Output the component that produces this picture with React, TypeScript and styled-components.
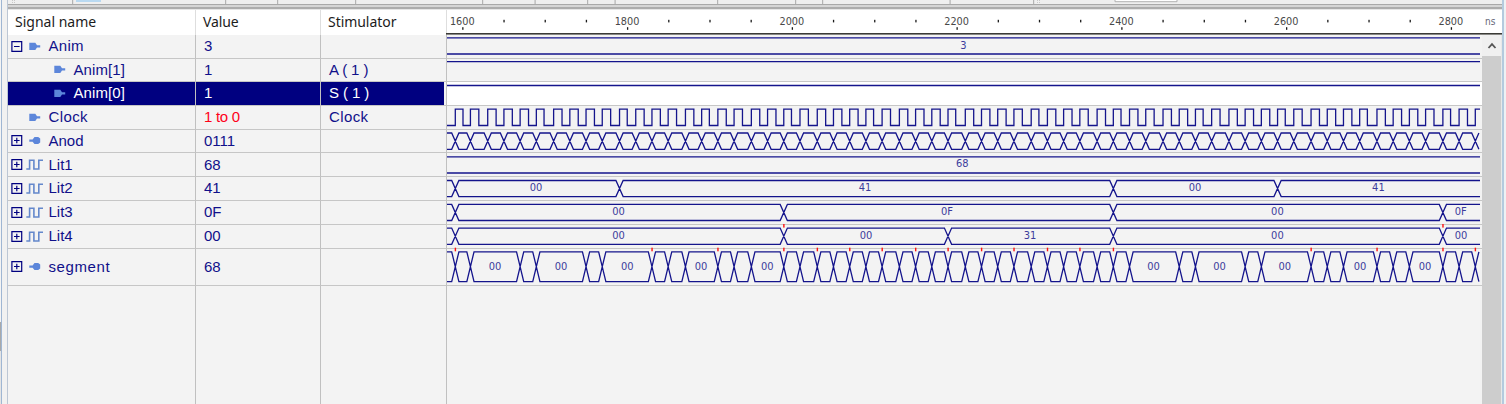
import React from "react";
import styled, { createGlobalStyle } from "styled-components";

const NAVY = "#000080";
const SMALL_FONT = '"DejaVu Sans Condensed", "DejaVu Sans", sans-serif';

const Global = createGlobalStyle`
  body { margin: 0; background: #f0f0f0; overflow: hidden; }
  * { box-sizing: border-box; }
`;

const Window = styled.div`
  display: grid;
  grid-template-columns: 8px 1494px 4px;
  width: 1506px;
  height: 404px;
  overflow: hidden;
`;

const LeftEdge = styled.div`
  display: flex;
  background: #f1f1f1;
  border-right: 1px solid #bcc6d4;
`;

const EdgeSlot = styled.div`
  width: 2px;
  height: 404px;
  border-right: 1px solid #9fb6d3;
  background: linear-gradient(#f4f4f4 0 322px, #a9a9a9 322px 351px, #e4e4e4 351px);
`;

const RightEdge = styled.div`
  background: #eef1f4;
  border-left: 2px solid #b4cade;
`;

const Main = styled.div`
  display: flex;
  flex-direction: column;
  background: #f3f3f3;
`;

const Toolbar = styled.div`
  display: block;
  flex: none;
  height: 10px;
  background: #efefef;
`;

const Header = styled.div`
  flex: none;
  display: grid;
  grid-template-columns: 188px 125px 126px 1055px;
  height: 25px;
  background: #fff;
`;

const HeaderCell = styled.div`
  border-right: 1px solid #dedede;
  padding: 0 0 0 7px;
  font: 14px/23px "Noto Sans", "Open Sans", sans-serif;
  color: #1c1c1c;
  white-space: nowrap;
`;

const HeaderText = styled.span<{ $spacing: number }>`
  letter-spacing: ${(p) => p.$spacing}px;
`;

const Content = styled.div`
  flex: 1;
  display: grid;
  grid-template-columns: 1474px 20px;
`;

const Rows = styled.div`
  display: flex;
  flex-direction: column;
`;

const Row = styled.div<{ $height: number }>`
  flex: none;
  display: grid;
  grid-template-columns: 188px 125px 126px 1035px;
  height: ${(p) => p.$height}px;
`;

const Blank = styled(Row)`
  flex: 1;
`;

const Cell = styled.div<{ $selected?: boolean; $indent?: number; $red?: boolean; $blank?: boolean }>`
  display: flex;
  align-items: center;
  min-width: 0;
  padding-left: ${(p) => p.$indent ?? 8}px;
  border-right: 1px solid #c0c0c0;
  border-bottom: ${(p) => (p.$blank ? "none" : "1px solid #c6c6c6")};
  background: ${(p) => (p.$selected ? NAVY : "#f3f3f3")};
  color: ${(p) => (p.$selected ? "#fff" : p.$red ? "#ff0018" : "#10108a")};
  font: 15px/20px "Liberation Sans", Arial, sans-serif;
  white-space: pre;
`;

const LastCell = styled(Cell)`
  box-shadow: ${(p) => (p.$selected ? "inset -2px 0 #f3f3f3" : "none")};
`;

const WaveCell = styled.div<{ $selected?: boolean }>`
  border-bottom: 1px solid #c6c6c6;
  background: ${(p) => (p.$selected ? "#fff" : "#f3f3f3")};
`;

const Svg = styled.svg`
  display: block;
  overflow: visible;
`;

const IconSlot = styled.span<{ $width: number }>`
  display: flex;
  flex: none;
  width: ${(p) => p.$width}px;
`;

const Label = styled.span<{ $low?: boolean; $spacing?: number }>`
  display: block;
  padding-top: ${(p) => (p.$low ? 1 : 0)}px;
  padding-bottom: ${(p) => (p.$low ? 0 : 1)}px;
  letter-spacing: ${(p) => p.$spacing ?? 0}px;
`;

const Scroll = styled.div`
  display: flex;
  flex-direction: column;
  background: #cdcdcd;
  border-right: 1px solid #e8e8e8;
`;

const ScrollButton = styled.div`
  display: flex;
  height: 21px;
  background: #f0f0f0;
  justify-content: center;
  align-items: center;
`;

/** Horizontal position of the n-th 20 ns transition. */
const tx = (n: number) => 455.3 + 1.0805 * (n === 0 ? 0 : Math.floor(15.24 * n - 0.25));

const range = (a: number, b: number) => Array.from({ length: b - a + 1 }, (_, i) => a + i);

type Note = [number, string];
interface Signal {
  name: string;
  value: string;
  stimulator?: string;
  height: number;
  low?: boolean;
  spacing?: number;
  icon: "in" | "out" | "wave";
  box?: "+" | "-";
  child?: boolean;
  selected?: boolean;
  red?: boolean;
  kind: "bus" | "high" | "clock";
  hi: number;
  lo?: number;
  edges?: number[];
  notes?: Note[];
  base?: number;
  marks?: number[];
}

const signals: Signal[] = [
  { name: "Anim", value: "3", height: 24, spacing: 0.3, icon: "in", box: "-", kind: "bus", hi: 37.8, lo: 54, notes: [[963.3, "3"]], base: 48.5 },
  { name: "Anim[1]", value: "1", stimulator: "A ( 1 )", height: 23, spacing: 0.1, icon: "in", child: true, kind: "high", hi: 61.6 },
  { name: "Anim[0]", value: "1", stimulator: "S ( 1 )", height: 24, spacing: 0.1, icon: "in", child: true, selected: true, kind: "high", hi: 85.5 },
  { name: "Clock", value: "1 to 0", stimulator: "Clock", height: 24, spacing: 0.4, icon: "in", red: true, kind: "clock", hi: 109.2, lo: 125.5 },
  { name: "Anod", value: "0111", height: 23, icon: "out", box: "+", kind: "bus", hi: 133, lo: 149.3, edges: range(0, 62) },
  { name: "Lit1", value: "68", height: 24, low: true, icon: "wave", box: "+", kind: "bus", hi: 156.8, lo: 173, notes: [[962.3, "68"]], base: 167.3 },
  { name: "Lit2", value: "41", height: 24, icon: "wave", box: "+", kind: "bus", hi: 180.5, lo: 196.6, edges: [0, 10, 40, 50], notes: [[536, "00"], [865, "41"], [1195, "00"], [1378.4, "41"]], base: 191.2 },
  { name: "Lit3", value: "0F", height: 24, icon: "wave", box: "+", kind: "bus", hi: 204.4, lo: 220.5, edges: [0, 20, 40, 60], notes: [[618.6, "00"], [947, "0F"], [1277.4, "00"], [1460.8, "0F"]], base: 215 },
  { name: "Lit4", value: "00", height: 24, icon: "wave", box: "+", kind: "bus", hi: 228.1, lo: 244.3, edges: [0, 20, 30, 40, 60], notes: [[618.6, "00"], [866, "00"], [1030, "31"], [1277.4, "00"], [1461, "00"]], base: 238.8, marks: [20, 60] },
  {
    name: "segment", value: "68", height: 37, spacing: 0.6, icon: "out", box: "+", kind: "bus", hi: 251.8, lo: 281.6,
    edges: [0, 1, 4, 5, 8, 9, 12, 13, 14, 16, 17, 18, ...range(20, 41), 44, 45, 48, 49, 52, 53, 54, 56, 57, 58, 60, 61, 62],
    notes: [495, 561, 627.2, 701, 767.3, 1153.5, 1219.5, 1284.8, 1360, 1425].map((x) => [x, "00"] as Note),
    base: 269.8,
    marks: [0, 12, 16, 20, 22, 24, 26, 28, 30, 32, 34, 36, 38, 40, 52, 56, 60, 62],
  },
];

function wavePath(s: Signal): string {
  const end = 1480;
  const { hi, lo = 0 } = s;
  if (s.kind === "high") return `M447 ${hi}H${end}`;
  if (s.kind === "clock") {
    let d = `M447 ${lo}`;
    for (let n = 0; n <= 62; n++) {
      const x = tx(n);
      d += `H${x}V${hi}`;
      d += n < 62 ? `H${x + (n % 5 === 0 ? 7.7 : 8.4)}V${lo}` : `H${end}`;
    }
    return d;
  }
  const e = s.edges ?? [];
  let a = `M447 ${hi}`;
  let b = `M447 ${lo}`;
  let up = true;
  for (const n of e) {
    const x = tx(n);
    const x2 = Math.min(x + 3.6, end);
    const t = (x2 - x + 3.6) / 7.2;
    const from = up ? hi : lo;
    const to = up ? lo : hi;
    a += `H${x - 3.6}L${x2} ${from + (to - from) * t}`;
    b += `H${x - 3.6}L${x2} ${to + (from - to) * t}`;
    up = !up;
  }
  if (e[e.length - 1] !== 62) {
    a += `H${end}`;
    b += `H${end}`;
  }
  return a + b;
}

function Wave({ s, top }: { s: Signal; top: number }) {
  return (
    <Svg width={1035} height={s.height - 1} viewBox={`447 ${top} 1035 ${s.height - 1}`}>
      <path d={wavePath(s)} fill="none" stroke="#14148c" strokeWidth={1.3} />
      {s.notes?.map(([x, t]) => (
        <text key={x} x={x} y={s.base} textAnchor="middle" fontSize={11} fill="#3c3c9c" fontFamily={SMALL_FONT}>
          {t}
        </text>
      ))}
      {s.marks?.map((n) => (
        <rect key={n} x={tx(n) - 0.6} y={s.hi - 4.1} width={1.4} height={3.6} fill="#ff1010" />
      ))}
    </Svg>
  );
}

function Expander({ sign }: { sign: "+" | "-" }) {
  return (
    <svg width="12" height="12" viewBox="0 0 12 12" fill="none" stroke={NAVY} strokeWidth="1.2">
      <path d={`M.9 .6H10.7V10.4H.9ZM3 5.5H8.6${sign === "+" ? "M5.8 2.7V8.3" : ""}`} />
    </svg>
  );
}

function SignalIcon({ type }: { type: Signal["icon"] }) {
  if (type === "wave")
    return (
      <svg width="18" height="12" viewBox="0 0 18 12" fill="none" stroke="#6488cc" strokeWidth="1.6">
        <path d="M.3 10H3.6V1.2H7.9V10H12.8V1.2H17" />
      </svg>
    );
  return (
    <svg width="18" height="12" viewBox="0 0 18 12" fill="#5c86da">
      {type === "in" ? (
        <path d="M3.3 1.8H9.3L11 4.2H14.2V6.6H11L9.3 9H3.3Z" />
      ) : (
        <path d="M3.3 4.6H6.6L8.5 2H12.2L14.2 3.6V7.6L12.2 9.1H8.5L6.6 6.8H3.3Z" />
      )}
    </svg>
  );
}

function ToolbarArt() {
  return (
    <Svg width={1494} height={10} viewBox="8 0 1494 10">
      {[72, 225, 277, 355, 482, 534.5, 587, 614.5, 717, 795, 822, 949.5, 1033].map((x) => (
        <rect key={x} x={x} y={0} width={1.2} height={4} fill="#b4b4b4" />
      ))}
      <rect x={76} y={0} width={25} height={2} fill="#b9d9f1" />
      <path d="M12 .5H16M12 2.5H16M1037 .5H1041M1037 2.5H1041" stroke="#c8c8c8" strokeDasharray="1 1" />
      <path d="M1115 0V1.7H1177V0" fill="#fff" stroke="#b0b0b0" />
      <rect x={8} y={4} width={1494} height={1} fill="#a9a9a9" />
      <rect x={8} y={5} width={1494} height={2} fill="#d6d6d6" />
      <rect x={8} y={7} width={1494} height={2} fill="#adadad" />
      <rect x={8} y={9} width={1494} height={1} fill="#e6e6e6" />
    </Svg>
  );
}

function Ruler() {
  return (
    <Svg width={1055} height={25} viewBox="447 10 1055 25">
      {range(0, 24).map((i) => {
        const x = 462.8 + i * 41.19;
        const major = i % 4 === 0;
        return (
          <React.Fragment key={i}>
            <rect x={x - 0.6} y={major ? 27.2 : 19.8} width={1.3} height={2.6} fill="#1a1a1a" />
            {major && (
              <text x={x - 0.5} y={25.2} textAnchor="middle" fontSize={10.8} fill="#484848" fontFamily={SMALL_FONT}>
                {1600 + i * 50}
              </text>
            )}
          </React.Fragment>
        );
      })}
      <text x={1485} y={25.2} fontSize={10} fill="#667" fontFamily={SMALL_FONT}>ns</text>
      <rect x={446} y={33} width={1056} height={1.6} fill="#3a3a36" />
    </Svg>
  );
}

export default function App() {
  let top = 35;
  return (
    <>
      <Global />
      <Window>
        <LeftEdge><EdgeSlot /></LeftEdge>
        <Main>
          <Toolbar><ToolbarArt /></Toolbar>
          <Header>
            <HeaderCell><HeaderText $spacing={0}>Signal name</HeaderText></HeaderCell>
            <HeaderCell><HeaderText $spacing={-0.1}>Value</HeaderText></HeaderCell>
            <HeaderCell><HeaderText $spacing={-0.05}>Stimulator</HeaderText></HeaderCell>
            <Ruler />
          </Header>
          <Content>
            <Rows>
              {signals.map((s) => {
                const rowTop = top;
                top += s.height;
                return (
                  <Row key={s.name} $height={s.height}>
                    <Cell $selected={s.selected} $indent={3}>
                      <IconSlot $width={s.child ? 40 : 15}>{s.box && <Expander sign={s.box} />}</IconSlot>
                      <IconSlot $width={22.5}><SignalIcon type={s.icon} /></IconSlot>
                      <Label $low={s.low} $spacing={s.spacing}>{s.name}</Label>
                    </Cell>
                    <Cell $selected={s.selected} $red={s.red}>
                      <Label $low={s.low} $spacing={s.red ? -0.3 : 0}>{s.value}</Label>
                    </Cell>
                    <LastCell $selected={s.selected}>
                      <Label $low={s.low} $spacing={s.stimulator === "Clock" ? 0.4 : -0.1}>{s.stimulator}</Label>
                    </LastCell>
                    <WaveCell $selected={s.selected}><Wave s={s} top={rowTop} /></WaveCell>
                  </Row>
                );
              })}
              <Blank $height={118}>
                <Cell $blank />
                <Cell $blank />
                <Cell $blank />
              </Blank>
            </Rows>
            <Scroll>
              <ScrollButton>
                <svg width="10" height="8" viewBox="0 0 10 8" fill="none" stroke="#555" strokeWidth="1.8">
                  <path d="M1.5 6L5 2.2L8.5 6" />
                </svg>
              </ScrollButton>
            </Scroll>
          </Content>
        </Main>
        <RightEdge />
      </Window>
    </>
  );
}
